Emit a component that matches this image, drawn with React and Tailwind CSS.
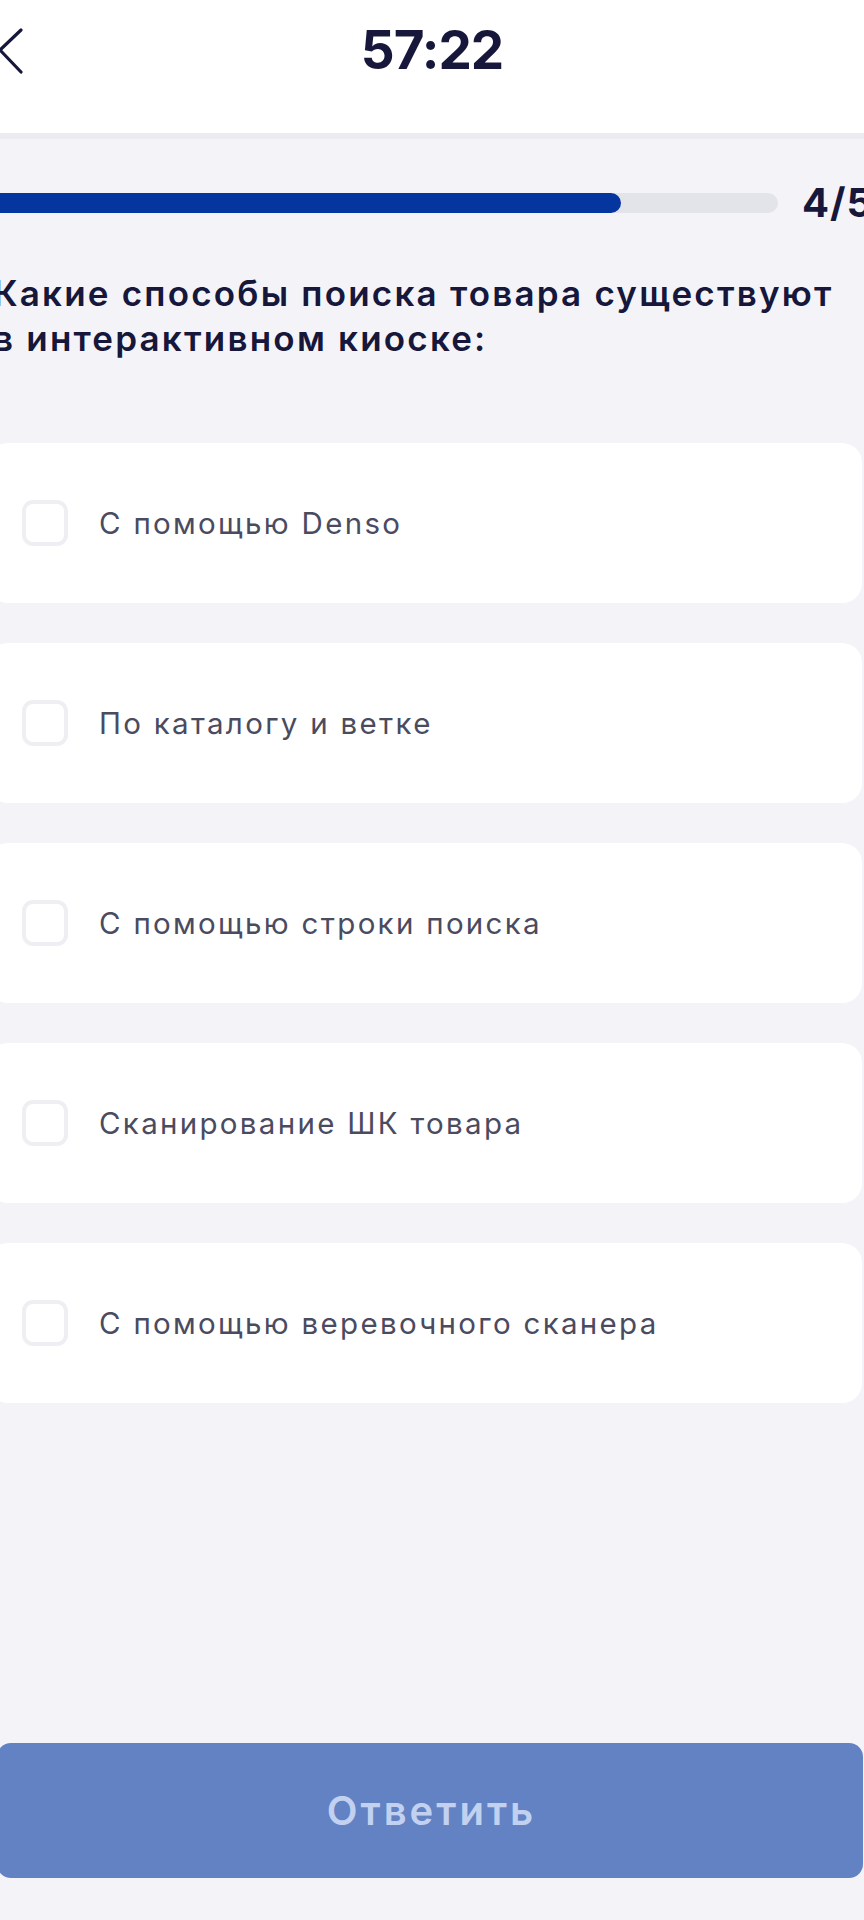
import { useState } from 'react';

const options = [
  'С помощью Denso',
  'По каталогу и ветке',
  'С помощью строки поиска',
  'Сканирование ШК товара',
  'С помощью веревочного сканера',
];

export default function App() {
  const [checked, setChecked] = useState([]);

  const toggle = (i) =>
    setChecked((c) => (c.includes(i) ? c.filter((x) => x !== i) : [...c, i]));

  return (
    <div className="w-[864px] h-[1920px] overflow-hidden bg-[#f4f4f8] flex flex-col font-['Inter','Noto_Sans',sans-serif]">
      {/* Header */}
      <header className="h-[133px] shrink-0 bg-white border-b-[6px] border-[#ececf0] box-content">
        <div className="grid grid-cols-[1fr_auto_1fr] items-center pt-[26px]">
          <button aria-label="Back" className="justify-self-start -ml-[3px]">
            <svg width="28" height="48" viewBox="0 0 28 48" fill="none" stroke="#16173a" strokeWidth="3.2" strokeLinecap="round" strokeLinejoin="round">
              <path d="M24 4 L3 24 L24 46" />
            </svg>
          </button>
          <div className="text-[53px] leading-[48px] font-bold tracking-[-1px] text-[#16173a]">57:22</div>
          <div />
        </div>
      </header>

      {/* Progress */}
      <div className="flex items-center mt-[49px] -ml-[20px] w-[1000px]">
        <div className="w-[798px] shrink-0 h-[20px] rounded-full bg-[#e3e4ea] overflow-hidden">
          <div className="h-full w-[641px] rounded-full bg-[#0536a0]" />
        </div>
        <span className="ml-[24px] text-[40px] leading-[30px] font-bold text-[#16173a] whitespace-nowrap tracking-[1px]">4/5</span>
      </div>

      {/* Question */}
      <h1 className="mt-[53px] -ml-[7px] w-[900px] text-[35px] leading-[45px] font-semibold text-[#16173a] tracking-[2.2px]">
        Какие способы поиска товара существуют<br />в интерактивном киоске:
      </h1>

      {/* Options */}
      <div className="mt-[82px] flex flex-col gap-[40px] -ml-[12px] w-[874px]">
        {options.map((label, i) => (
          <button
            key={label}
            onClick={() => toggle(i)}
            className="h-[160px] bg-white rounded-[20px] flex items-center pl-[34px] text-left"
          >
            <span
              className={`w-[46px] h-[46px] rounded-[11px] border-[4px] shrink-0 ${
                checked.includes(i) ? 'border-[#0536a0] bg-[#0536a0]' : 'border-[#efeff3] bg-white'
              }`}
            />
            <span className="ml-[31px] text-[29.5px] text-[#4b4b5f] tracking-[2.3px]">{label}</span>
          </button>
        ))}
      </div>

      {/* Submit */}
      <div className="mt-auto mb-[42px] -ml-[3px] w-[866px]">
        <button
          disabled
          className="w-full h-[135px] rounded-[14px] bg-[#6282c4] text-[#c3d1f0] text-[40px] font-semibold tracking-[3px] pl-[3px]"
        >
          Ответить
        </button>
      </div>
    </div>
  );
}
